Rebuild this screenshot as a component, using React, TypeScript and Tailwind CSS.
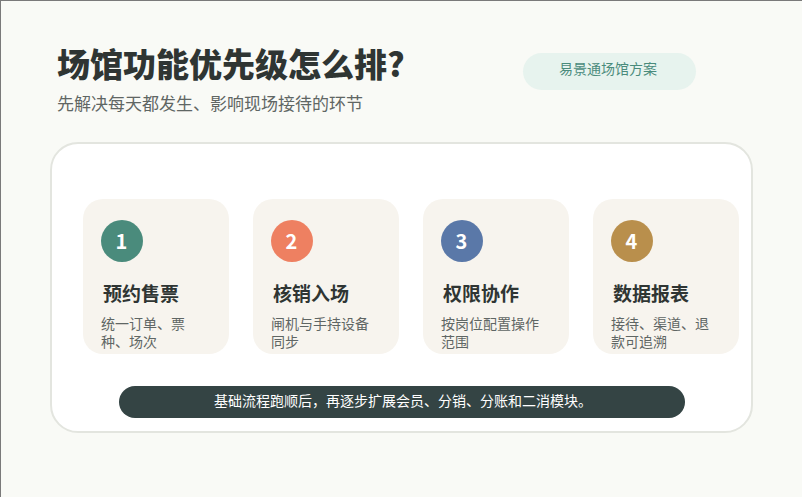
const FONT = "font-['Noto_Sans_CJK_SC','Noto_Sans',sans-serif]";

const STEPS = [
  { n: "1", color: "bg-[#4a8b7c]", title: "预约售票", desc: "统一订单、票种、场次" },
  { n: "2", color: "bg-[#ee8061]", title: "核销入场", desc: "闸机与手持设备同步" },
  { n: "3", color: "bg-[#5a78a8]", title: "权限协作", desc: "按岗位配置操作范围" },
  { n: "4", color: "bg-[#b98f4c]", title: "数据报表", desc: "接待、渠道、退款可追溯" },
];

function StepCard({ n, color, title, desc }: (typeof STEPS)[number]) {
  return (
    <div className="flex h-[155px] w-[145.5px] shrink-0 flex-col overflow-hidden rounded-[20px] bg-[#f7f4ee] pl-[18px] pr-[24px] pt-[21px]">
      <div className={`flex h-[42px] w-[42px] items-center justify-center rounded-full pr-[1px] text-[20px] font-bold text-white ${color}`}>
        {n}
      </div>
      <h3 className="mt-[17px] pl-[2px] text-[19px] font-bold leading-[28px] text-[#2f3533]">{title}</h3>
      <p className="mt-[7px] text-[14px] leading-[18px] text-[#5f6664]">{desc}</p>
    </div>
  );
}

export default function App() {
  return (
    <div className={`${FONT} h-[497px] w-[802px] overflow-hidden border-l border-t border-[#7a7a7a] bg-[#f9faf6]`}>
      <header className="flex items-start pl-[56px] pt-[41px]">
        <div className="w-[466px]">
          <h1 className="text-[33px] font-black leading-[42px] text-[#2f3533]">场馆功能优先级怎么排?</h1>
          <p className="mt-[7px] text-[17px] leading-[24px] text-[#5f6664]">先解决每天都发生、影响现场接待的环节</p>
        </div>
        <div className="mt-[11px] flex h-[37px] w-[173px] justify-center rounded-full bg-[#e7f3ee] pr-[3px] pt-[5px] text-[14px] leading-[20px] text-[#4a8b7c]">
          易景通场馆方案
        </div>
      </header>
      <main className="ml-[49px] mt-[27px] h-[291px] w-[703px] rounded-[28px] border-2 border-[#e3e5df] bg-white pt-[55px]">
        <div className="flex gap-[24.5px] pl-[31px]">
          {STEPS.map((s) => (
            <StepCard key={s.n} {...s} />
          ))}
        </div>
        <div className="ml-[67px] mt-[32px] flex h-[32px] w-[566px] justify-center rounded-[16px] bg-[#344444] pl-[2px] pt-[4px] text-[14px] leading-[20px] text-white">
          基础流程跑顺后，再逐步扩展会员、分销、分账和二消模块。
        </div>
      </main>
    </div>
  );
}
